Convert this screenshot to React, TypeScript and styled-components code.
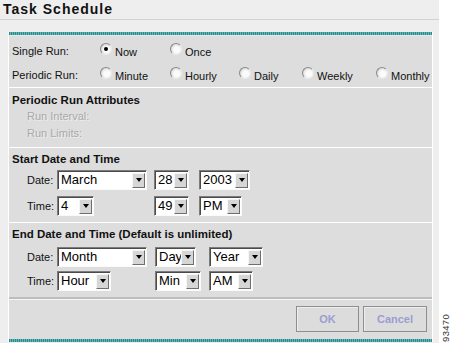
import React from "react";
import styled, { createGlobalStyle } from "styled-components";

const GlobalStyle = createGlobalStyle`
  html, body {
    margin: 0;
    padding: 0;
    background: #fff;
  }
  body {
    font-family: "Liberation Sans", Arial, sans-serif;
  }
`;

const Page = styled.div`
  display: flex;
  width: 452px;
  height: 343px;
  overflow: hidden;
`;

const Main = styled.div`
  width: 439px;
  background: #eeeeee;
`;

const Side = styled.div`
  flex: 1;
  background: #fff;
  display: flex;
  align-items: flex-end;
  justify-content: center;
  padding-bottom: 1px;
`;

const FigureNo = styled.span`
  writing-mode: vertical-rl;
  transform: rotate(180deg);
  font: 9.5px/10px "Liberation Sans", Arial, sans-serif;
  color: #333;
  letter-spacing: 0.3px;
`;

const Title = styled.h1`
  margin: 0;
  height: 20px;
  box-sizing: border-box;
  padding: 2px 0 0 3px;
  font: bold 14px/15px "Liberation Sans", Arial, sans-serif;
  letter-spacing: 1px;
  color: #111;
  background: #efeeef;
  border-bottom: 1px solid #d2d2d2;
`;

const Panel = styled.div`
  margin: 12px 0 0 8px;
  width: 425px;
  box-sizing: border-box;
  background: #dddddd;
  border-left: 1px solid #fff;
  border-right: 1px solid #fff;
`;

const Stripe = styled.div<{ $top?: boolean }>`
  height: 3px;
  background: repeating-linear-gradient(90deg, #2b8b8b 0 1px, #62b8b8 1px 2px);
  border-bottom: ${(p) => (p.$top ? "1px solid #ece6e6" : "none")};
`;

const Section = styled.div<{ $pt: number; $pb: number; $line?: boolean }>`
  padding: ${(p) => p.$pt}px 0 ${(p) => p.$pb}px 3px;
  border-bottom: ${(p) => (p.$line === false ? "none" : "1px solid #fff")};
`;

const RadioGrid = styled.div`
  display: grid;
  grid-template-columns: 88px 70px 69px 63px 74px 1fr;
  grid-auto-rows: 24px;
  align-items: center;
`;

const Label = styled.span`
  font: 11px/14px "Liberation Sans", Arial, sans-serif;
  color: #111;
  white-space: nowrap;
`;

const RadioOption = styled.label`
  display: flex;
  align-items: center;
  gap: 3px;
  font: 11px/14px "Liberation Sans", Arial, sans-serif;
  color: #111;
  white-space: nowrap;
  padding-top: 2px;
`;

const RadioCircle = styled.span<{ $checked?: boolean }>`
  width: 12px;
  height: 12px;
  box-sizing: border-box;
  border-radius: 50%;
  border: 1px solid;
  border-color: #8a8a8a #ececec #ececec #8a8a8a;
  background: radial-gradient(circle at 58% 58%, #fbfbfb 0 35%, #cfcfcf 85%);
  display: flex;
  align-items: center;
  justify-content: center;
  margin-bottom: 6px;

  &::after {
    content: "";
    width: 4px;
    height: 4px;
    border-radius: 50%;
    background: #000;
    display: ${(p) => (p.$checked ? "block" : "none")};
  }
`;

const Heading = styled.div`
  font: bold 11.5px/16px "Liberation Sans", Arial, sans-serif;
  color: #111;
  white-space: nowrap;
`;

const DisabledRow = styled.div`
  height: 17px;
  padding-left: 15px;
  font: 11px/17px "Liberation Sans", Arial, sans-serif;
  color: #a9a9a9;
  text-shadow: 1px 1px 0 rgba(255, 255, 255, 0.5);
`;

const FieldGrid = styled.div<{ $cols: string; $gap: number; $mt: number }>`
  display: grid;
  grid-template-columns: ${(p) => p.$cols};
  grid-auto-rows: 20px;
  row-gap: ${(p) => p.$gap}px;
  margin-top: ${(p) => p.$mt}px;
  padding-left: 15px;
  align-items: center;
`;

const FieldLabel = styled.span`
  font: 11px/14px "Liberation Sans", Arial, sans-serif;
  color: #111;
`;

const SelectBox = styled.div<{ $w: number }>`
  width: ${(p) => p.$w}px;
  height: 20px;
  box-sizing: border-box;
  display: flex;
  align-items: center;
  background: #fff;
  border: 1px solid;
  border-color: #7c7c7c #fafafa #fafafa #7c7c7c;
  box-shadow: inset 1px 1px 0 #4a4a4a;
`;

const SelectValue = styled.span`
  flex: 1;
  min-width: 0;
  padding-left: 3px;
  font: 13px/16px "Liberation Sans", Arial, sans-serif;
  color: #000;
  white-space: nowrap;
`;

const ArrowButton = styled.span`
  flex-shrink: 0;
  width: 13px;
  height: 15px;
  margin-right: 1px;
  box-sizing: border-box;
  background: #d6d6d6;
  border: 1px solid;
  border-color: #f6f6f6 #6e6e6e #6e6e6e #f6f6f6;
  display: flex;
  align-items: center;
  justify-content: center;

  &::after {
    content: "";
    border-left: 3.5px solid transparent;
    border-right: 3.5px solid transparent;
    border-top: 4px solid #000;
  }
`;

const Divider = styled.div`
  height: 2px;
  background: #bdbdbd;
  border-bottom: 1px solid #f4f4f4;
`;

const ButtonBar = styled.div`
  height: 39px;
  box-sizing: border-box;
  padding: 6px 5px 0 0;
  display: flex;
  justify-content: flex-end;
  gap: 4px;
`;

const Button = styled.button<{ $w: number }>`
  width: ${(p) => p.$w}px;
  height: 26px;
  padding: 0;
  background: #dcdcdc;
  border: 1px solid #8e8e8e;
  box-shadow: inset 1px 1px 0 #efefef;
  font: bold 11px "Liberation Sans", Arial, sans-serif;
  color: #9c9cd2;
`;

const Select = ({ w, value }: { w: number; value: string }) => (
  <SelectBox $w={w}>
    <SelectValue>{value}</SelectValue>
    <ArrowButton />
  </SelectBox>
);

const Radio = ({ text, checked }: { text: string; checked?: boolean }) => (
  <RadioOption>
    <RadioCircle $checked={checked} />
    {text}
  </RadioOption>
);

const App = () => {
  return (
    <>
      <GlobalStyle />
      <Page>
        <Main>
          <Title>Task Schedule</Title>
          <Panel>
            <Stripe $top />
            <Section $pt={3} $pb={0}>
              <RadioGrid>
                <Label>Single Run:</Label>
                <Radio text="Now" checked />
                <Radio text="Once" />
                <span />
                <span />
                <span />
                <Label>Periodic Run:</Label>
                <Radio text="Minute" />
                <Radio text="Hourly" />
                <Radio text="Daily" />
                <Radio text="Weekly" />
                <Radio text="Monthly" />
              </RadioGrid>
            </Section>
            <Section $pt={4} $pb={5}>
              <Heading>Periodic Run Attributes</Heading>
              <DisabledRow>Run Interval:</DisabledRow>
              <DisabledRow>Run Limits:</DisabledRow>
            </Section>
            <Section $pt={3} $pb={6}>
              <Heading>Start Date and Time</Heading>
              <FieldGrid $cols="30px 97px 45px auto" $gap={6} $mt={3}>
                <FieldLabel>Date:</FieldLabel>
                <Select w={90} value="March" />
                <Select w={35} value="28" />
                <Select w={51} value="2003" />
                <FieldLabel>Time:</FieldLabel>
                <Select w={37} value="4" />
                <Select w={35} value="49" />
                <Select w={43} value="PM" />
              </FieldGrid>
            </Section>
            <Section $pt={3} $pb={6} $line={false}>
              <Heading>End Date and Time (Default is unlimited)</Heading>
              <FieldGrid $cols="30px 98px 54px auto" $gap={4} $mt={5}>
                <FieldLabel>Date:</FieldLabel>
                <Select w={90} value="Month" />
                <Select w={41} value="Day" />
                <Select w={54} value="Year" />
                <FieldLabel>Time:</FieldLabel>
                <Select w={54} value="Hour" />
                <Select w={46} value="Min" />
                <Select w={44} value="AM" />
              </FieldGrid>
            </Section>
            <Divider />
            <ButtonBar>
              <Button $w={63}>OK</Button>
              <Button $w={64}>Cancel</Button>
            </ButtonBar>
            <Stripe />
          </Panel>
        </Main>
        <Side>
          <FigureNo>93470</FigureNo>
        </Side>
      </Page>
    </>
  );
};

export default App;
